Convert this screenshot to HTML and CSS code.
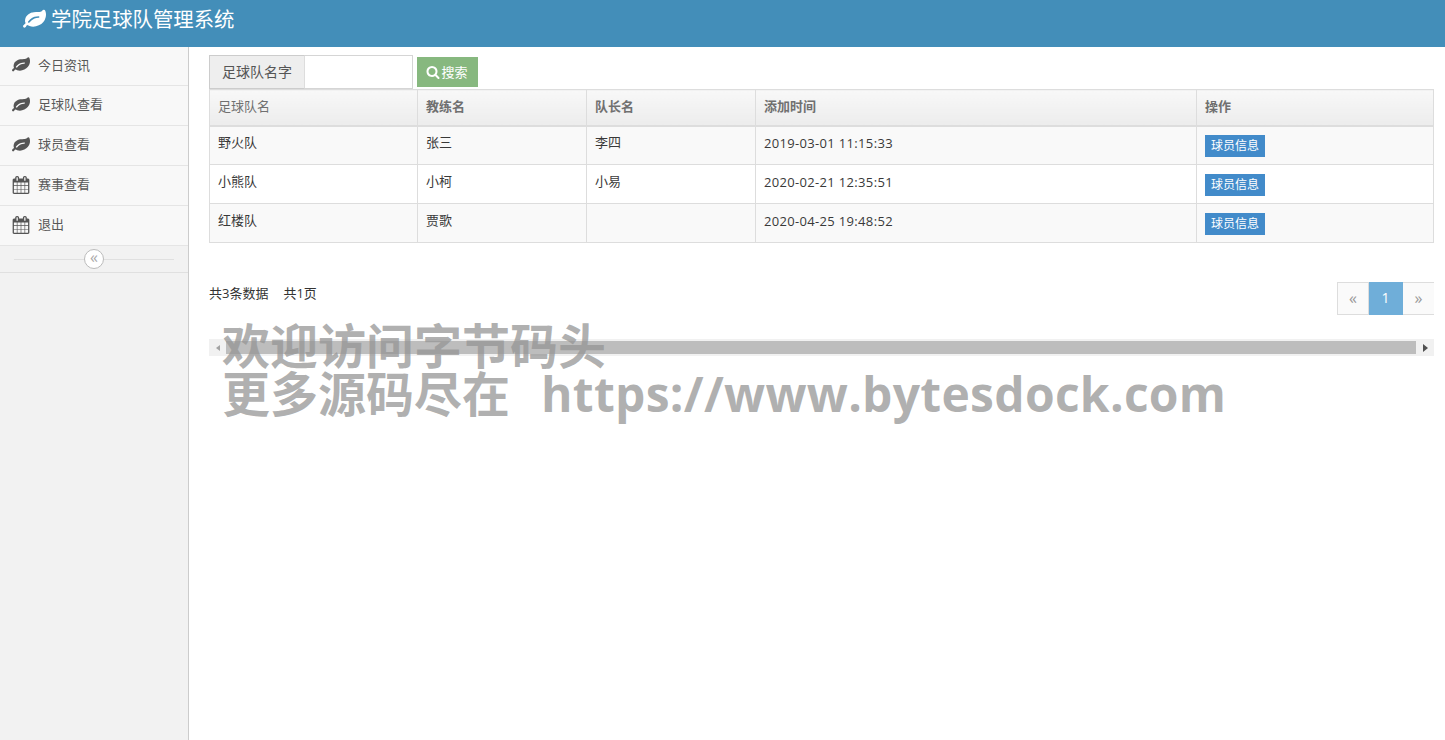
FILE: index.html
```html
<!DOCTYPE html>
<html lang="zh-CN">
<head>
<meta charset="utf-8">
<title>学院足球队管理系统</title>
<link rel="stylesheet" href="styles.css">
</head>
<body>
<svg class="defs" width="0" height="0" aria-hidden="true">
  <symbol id="leaf" viewBox="0 0 1792 1792"><path d="M1280 704q0-26-19-45t-45-19q-172 0-318 49.500t-259.500 134-235.500 219.500q-19 21-19 45 0 26 19 45t45 19q24 0 45-19 27-24 74-71t67-66q137-124 268.500-176t313.500-52q26 0 45-19t19-45zm512-198q0 95-20 193-46 224-184.500 383t-357.500 268q-214 108-438 108-148 0-286-47-15-5-88-42t-96-37q-16 0-39.500 32t-45 70-52.500 70-60 32q-30 0-51-11t-31-24-27-42q-2-4-6-11t-5.500-10-3-9.500-1.500-13.500q0-35 31-73.500t68-65.500 68-56 31-48q0-4-14-38t-16-44q-9-51-9-104 0-115 43.500-220t119-184.500 170.500-139 204-95.500q55-18 145-25.500t179.500-9 178.500-6 163.500-24 113.500-56.500l29.500-29.500 29.500-28 27-20 36.500-16 43.500-4.500q39 0 70.500 46t47.500 112 24 124 8 96z"/></symbol>
  <symbol id="cal" viewBox="0 0 1792 1792"><path d="M192 1664h288v-288h-288v288zm352 0h320v-288h-320v288zm-352-352h288v-320h-288v320zm352 0h320v-320h-320v320zm-352-384h288v-288h-288v288zm736 736h320v-288h-320v288zm-384-736h320v-288h-320v288zm768 736h288v-288h-288v288zm-384-352h320v-320h-320v320zm-352-864v-288q0-13-9.500-22.500t-22.500-9.500h-64q-13 0-22.500 9.500t-9.500 22.500v288q0 13 9.500 22.500t22.500 9.500h64q13 0 22.500-9.500t9.500-22.500zm736 864h288v-320h-288v320zm-384-384h320v-288h-320v288zm384 0h288v-288h-288v288zm32-480v-288q0-13-9.500-22.500t-22.500-9.500h-64q-13 0-22.500 9.500t-9.500 22.500v288q0 13 9.500 22.500t22.500 9.500h64q13 0 22.500-9.500t9.500-22.500zm384-64v1280q0 52-38 90t-90 38h-1408q-52 0-90-38t-38-90v-1280q0-52 38-90t90-38h128v-96q0-66 47-113t113-47h64q66 0 113 47t47 113v96h384v-96q0-66 47-113t113-47h64q66 0 113 47t47 113v96h128q52 0 90 38t38 90z"/></symbol>
  <symbol id="search" viewBox="0 0 1792 1792"><path d="M1216 832q0-185-131.500-316.500t-316.500-131.500-316.500 131.500-131.500 316.500 131.500 316.500 316.500 131.500 316.500-131.500 131.500-316.500zm512 832q0 52-38 90t-90 38q-54 0-90-38l-343-342q-179 124-399 124-143 0-273.500-55.500t-225-150-150-225-55.500-273.500 55.500-273.500 150-225 225-150 273.500-55.500 273.500 55.500 225 150 150 225 55.500 273.500q0 220-124 399l343 343q37 37 37 90z"/></symbol>
</svg>

<header class="topbar">
  <svg class="brand-icon"><use href="#leaf"/></svg>
  <span class="brand-text">学院足球队管理系统</span>
</header>

<div class="layout">
  <aside class="sidebar">
    <ul class="nav">
      <li class="nav-item"><svg class="nav-icon leaf"><use href="#leaf"/></svg><span>今日资讯</span></li>
      <li class="nav-item"><svg class="nav-icon leaf"><use href="#leaf"/></svg><span>足球队查看</span></li>
      <li class="nav-item"><svg class="nav-icon leaf"><use href="#leaf"/></svg><span>球员查看</span></li>
      <li class="nav-item"><svg class="nav-icon"><use href="#cal"/></svg><span>赛事查看</span></li>
      <li class="nav-item"><svg class="nav-icon"><use href="#cal"/></svg><span>退出</span></li>
    </ul>
    <div class="collapse"><span class="collapse-btn">«</span></div>
  </aside>

  <main class="content">
    <form class="search">
      <div class="input-group">
        <span class="addon">足球队名字</span>
        <input class="field" type="text">
      </div>
      <button class="search-btn" type="button"><svg class="search-icon"><use href="#search"/></svg>搜索</button>
    </form>

    <table class="grid">
      <colgroup>
        <col class="c1"><col class="c2"><col class="c3"><col class="c4"><col class="c5">
      </colgroup>
      <thead>
        <tr><th class="first">足球队名</th><th>教练名</th><th>队长名</th><th>添加时间</th><th>操作</th></tr>
      </thead>
      <tbody>
        <tr><td>野火队</td><td>张三</td><td>李四</td><td class="when">2019-03-01 11:15:33</td><td class="act"><a class="tag">球员信息</a></td></tr>
        <tr><td>小熊队</td><td>小柯</td><td>小易</td><td class="when">2020-02-21 12:35:51</td><td class="act"><a class="tag">球员信息</a></td></tr>
        <tr><td>红楼队</td><td>贾歌</td><td></td><td class="when">2020-04-25 19:48:52</td><td class="act"><a class="tag">球员信息</a></td></tr>
      </tbody>
    </table>

    <div class="pager-row">
      <div class="summary"><span>共3条数据</span><span>共1页</span></div>
      <ul class="pager">
        <li class="page">«</li>
        <li class="page active">1</li>
        <li class="page">»</li>
      </ul>
    </div>

    <div class="hscroll">
      <span class="arrow left"></span>
      <span class="thumb"></span>
      <span class="arrow right"></span>
    </div>
  </main>
</div>

<div class="watermark">欢迎访问字节码头<br>更多源码尽在<span class="wm-url">https://www.bytesdock.com</span></div>
</body>
</html>
```
FILE: styles.css
```css
* { box-sizing: border-box; }
html, body { margin: 0; padding: 0; height: 100%; overflow: hidden; }
body {
  font-family: "Open Sans", "Noto Sans CJK SC", sans-serif;
  font-size: 13px;
  color: #393939;
  background: #fff;
  position: relative;
}
.defs { position: absolute; }
svg { fill: currentColor; display: block; }

.topbar {
  height: 47px;
  background: #438eb9;
  color: #fff;
  display: flex;
  align-items: flex-start;
  padding: 7px 0 0 23px;
}
.brand-icon { width: 23px; height: 23px; margin-top: 1px; margin-right: 5px; }
.brand-text { font-size: 20.4px; line-height: 24px; }

.layout { display: flex; height: 693px; }
.sidebar {
  width: 189px;
  flex: none;
  background: #f2f2f2;
  border-right: 1px solid #ccc;
}
.nav { list-style: none; margin: 0; padding: 0; }
.nav-item {
  height: 40px;
  background: #f8f8f8;
  border-bottom: 1px solid #e5e5e5;
  color: #585858;
  display: flex;
  align-items: center;
  padding-left: 12px;
  padding-bottom: 4px;
}
.nav-item:first-child { height: 39px; }
.nav-icon { width: 18px; height: 18px; margin-right: 8px; margin-top: 2px; color: #555; }
.collapse {
  height: 27px;
  border-bottom: 1px solid #e0e0e0;
  display: flex;
  align-items: center;
  justify-content: center;
  background: linear-gradient(#e0e0e0, #e0e0e0) no-repeat center / 160px 1px;
}
.collapse-btn {
  width: 20px;
  height: 20px;
  border-radius: 50%;
  border: 1px solid #bbb;
  background: #fff;
  color: #aaa;
  font-size: 16px;
  line-height: 15px;
  text-align: center;
}

.content { flex: 1; min-width: 0; padding: 8px 11px 0 20px; }

.search { display: flex; height: 34px; }
.input-group { display: flex; height: 34px; }
.addon {
  width: 96px;
  background: #eee;
  border: 1px solid #ccc;
  border-right: 1px solid #ddd;
  color: #555;
  font-size: 14px;
  line-height: 31px;
  text-align: center;
}
.field {
  width: 108px;
  height: 34px;
  border: 1px solid #d5d5d5;
  border-left: 0;
  background: #fff;
  padding: 0;
  outline: 0;
}
.search-btn {
  height: 30px;
  width: 61px;
  margin: 2px 0 0 4px;
  background: #87b87f;
  border: 0;
  color: #fff;
  font: inherit;
  display: flex;
  align-items: center;
  justify-content: center;
  padding: 0 1px 2px 0;
}
.search-icon { width: 14px; height: 14px; margin: 2px 1px 0 0; }

.grid {
  width: 1224px;
  height: 154px;
  border-collapse: collapse;
  table-layout: fixed;
  border: 1px solid #ddd;
}
.c1 { width: 208px; }
.c2, .c3 { width: 169px; }
.c4 { width: 441px; }
.c5 { width: 237px; }
.grid th {
  height: 36px;
  background: linear-gradient(#f8f8f8, #ececec);
  border: 1px solid #ddd;
  border-bottom: 2px solid #ddd;
  color: #707070;
  font-weight: 700;
  text-align: left;
  padding: 0 8px 3px;
}
.grid th.first { font-weight: 400; }
.grid td {
  height: 39px;
  border: 1px solid #ddd;
  padding: 0 8px 8px;
  color: #393939;
  vertical-align: middle;
}
.grid td.when { padding-bottom: 4px; letter-spacing: .33px; }
.grid td.act { padding-bottom: 4px; }
.grid tbody tr:nth-child(odd) td { background: #f9f9f9; }
.tag {
  display: block;
  width: 60px;
  height: 22px;
  margin-top: 6px;
  background: #428bca;
  color: #fff;
  font-size: 12px;
  line-height: 22px;
  text-align: center;
}

.pager-row {
  display: flex;
  justify-content: space-between;
  padding-top: 39px;
  height: 96px;
}
.summary { display: flex; gap: 15px; line-height: 22px; color: #333; }
.pager { list-style: none; margin: 0; padding: 0; display: flex; height: 33px; }
.page {
  width: 33px;
  height: 33px;
  border: 1px solid #ddd;
  border-left: 0;
  background: #fafafa;
  color: #999;
  font-size: 16px;
  line-height: 30px;
  text-align: center;
}
.page:first-child { border-left: 1px solid #ddd; width: 32px; }
.page:last-child { border-right: 0; width: 31px; }
.page.active { background: #6faed9; border-color: #6faed9; color: #fff; font-size: 14px; width: 34px; }

.hscroll {
  height: 17px;
  background: #f1f1f1;
  display: flex;
  align-items: center;
}
.arrow { width: 17px; flex: none; display: flex; justify-content: center; }
.arrow.right { width: 18px; }
.arrow.left::before {
  content: "";
  border: 3px solid transparent;
  border-right: 4px solid #a3a3a3;
  border-left: 0;
}
.arrow.right::before {
  content: "";
  border: 4px solid transparent;
  border-left: 5px solid #505050;
  border-right: 0;
}
.thumb { flex: 1; height: 13px; background: #bdbdbd; }

.watermark {
  position: absolute;
  left: 222px;
  top: 322px;
  font-family: "Open Sans", "Noto Sans CJK SC", sans-serif;
  font-size: 48px;
  font-weight: 700;
  line-height: 48px;
  color: rgba(150, 150, 150, .75);
  white-space: nowrap;
}
.wm-url { margin-left: 31px; letter-spacing: .28px; }
```
